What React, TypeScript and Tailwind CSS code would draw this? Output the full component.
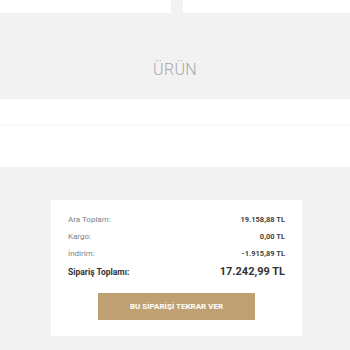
const rows = [
  { label: "Ara Toplam:", value: "19.158,88 TL" },
  { label: "Kargo:", value: "0,00 TL" },
  { label: "İndirim:", value: "-1.915,89 TL" },
];

export default function App() {
  return (
    <div className="w-[350px] h-[350px] overflow-hidden bg-[#f2f2f2] font-['Roboto',sans-serif]">
      <div className="flex h-[13px] gap-[12px]">
        <div className="w-[171px] bg-white" />
        <div className="flex-1 bg-white" />
      </div>

      <div className="h-[86px] flex items-end justify-center pb-[17px]">
        <span className="text-[16px] font-light text-[#a8a8a8] tracking-[0.3px]">ÜRÜN</span>
      </div>

      <div className="h-[25px] bg-white" />
      <div className="h-[2px] bg-[#f8f8f8]" />
      <div className="h-[41px] bg-white" />

      <div className="pt-[33px] pl-[51px]">
        <div className="w-[251px] bg-white px-[17px] pt-[11px] pb-[16px]">
          {rows.map((r) => (
            <div key={r.label} className="h-[17px] flex items-center justify-between">
              <span className="text-[8px] font-normal text-[#808080]">{r.label}</span>
              <span className="text-[7.5px] font-bold text-[#444]">{r.value}</span>
            </div>
          ))}
          <div className="h-[20px] flex items-center justify-between">
            <span className="text-[8.5px] font-bold text-[#333]">Sipariş Toplamı:</span>
            <span className="text-[11px] font-bold text-[#333]">17.242,99 TL</span>
          </div>
          <div className="mt-[11px] flex justify-center">
            <button className="w-[157px] h-[27px] bg-[#bfa072] text-white text-[8px] font-bold">
              BU SİPARİŞİ TEKRAR VER
            </button>
          </div>
        </div>
      </div>
    </div>
  );
}
